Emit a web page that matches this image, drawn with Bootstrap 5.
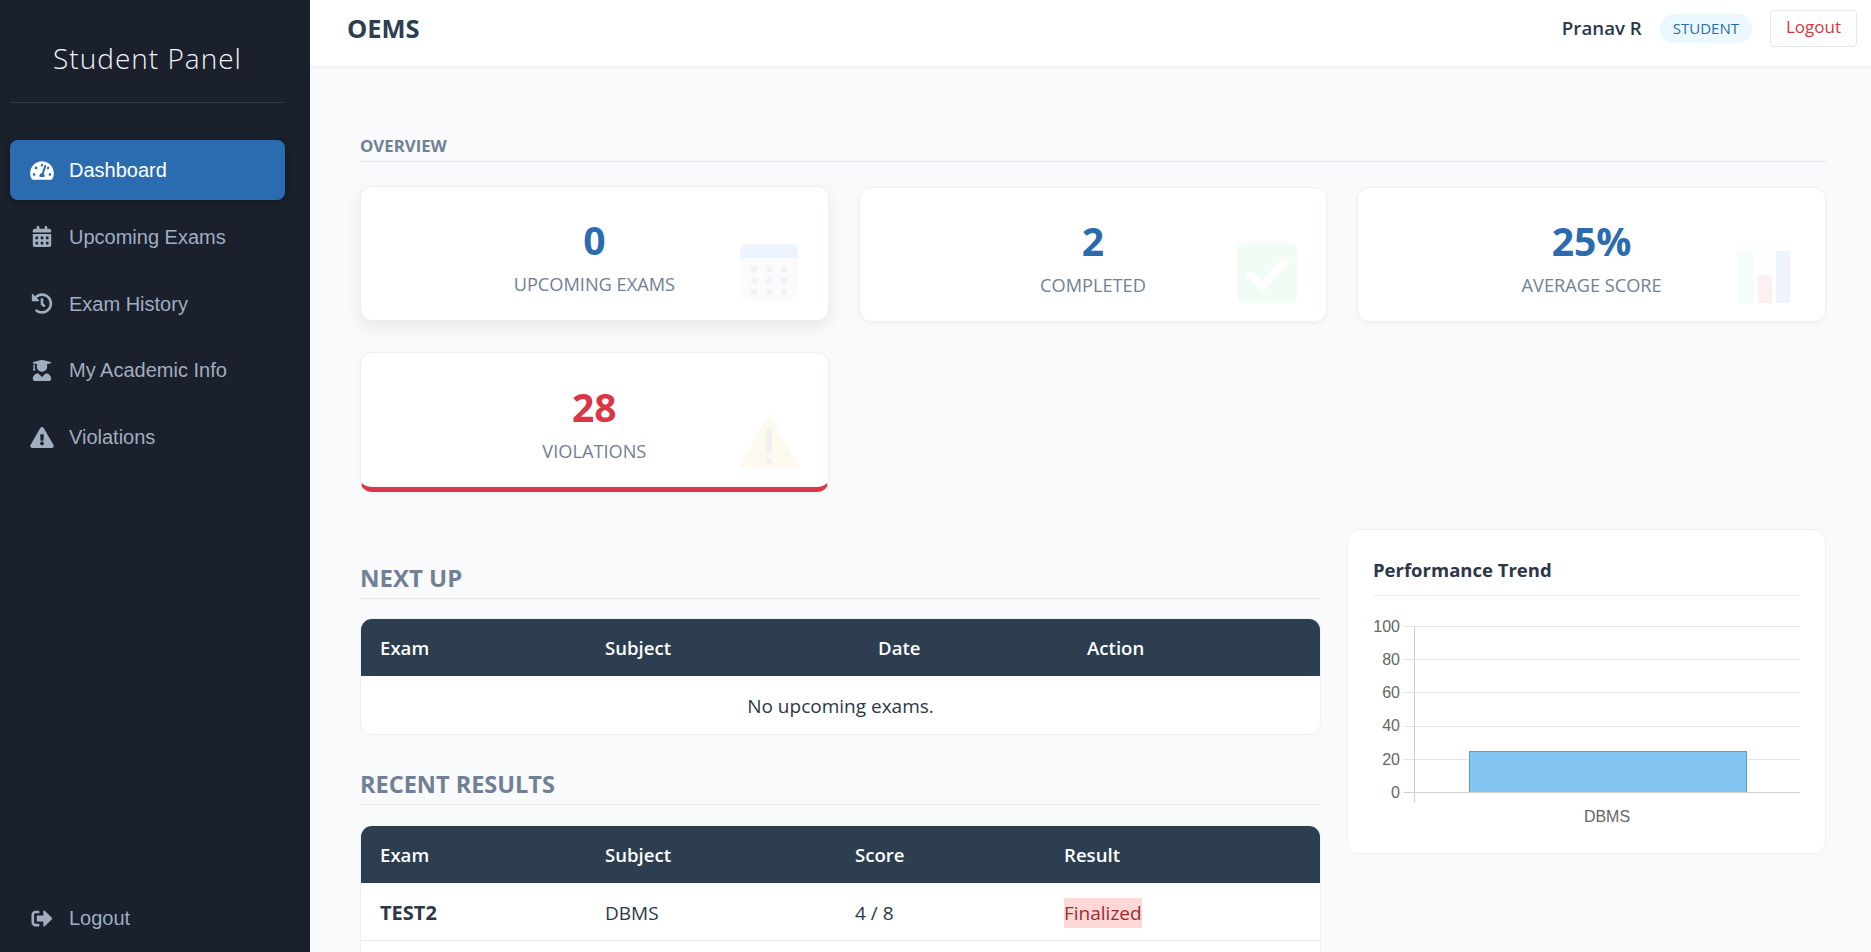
<!DOCTYPE html>
<html lang="en">
<head>
    <meta charset="UTF-8">
    <meta name="viewport" content="width=device-width, initial-scale=1.0">
    <title>OEMS - Student Dashboard</title>
    <link href="https://cdn.jsdelivr.net/npm/bootstrap@5.3.0/dist/css/bootstrap.min.css" rel="stylesheet">
    <style>
        html, body { height: 100%; overflow: hidden; }
        body {
            font-family: "Open Sans", "Noto Sans", sans-serif;
            background: #f8fafc;
            color: #2d3748;
        }
        .app-shell { height: 952px; }
        .side-panel { width: 310px; background: #1a202c; padding: 0 25px 0 10px; }
        .side-title {
            font-weight: 300;
            font-size: 28px;
            letter-spacing: 1px;
            line-height: 38px;
            color: #f1f5f9;
            text-align: center;
            padding: 39px 0 25px;
            border-bottom: 1px solid #2d3748;
            margin-bottom: 37px;
        }
        .side-link {
            font-family: "Liberation Sans", Arial, sans-serif;
            font-size: 20px;
            color: #a0aec0;
            height: 60px;
            margin-bottom: 6.8px;
            padding-left: 20px;
            border-radius: 8px;
            text-decoration: none;
        }
        .side-link svg { width: 24px; height: 21px; fill: currentColor; margin-right: 15px; flex: none; }
        .side-link.is-active { background: #2b6cb0; color: #fff; box-shadow: 0 2px 6px rgba(0,0,0,.25); }
        .side-foot { margin-top: auto; margin-bottom: 4px; }

        .top-strip {
            height: 67px;
            background: #fff;
            border-bottom: 1px solid #e9edf2;
            box-shadow: 0 1px 3px rgba(0,0,0,.04);
            padding: 0 14px 0 37px;
        }
        .brand-name { font-size: 25.5px; font-weight: 700; color: #2c3e50; margin-bottom: 10px; }
        .user-name { font-size: 18.7px; font-weight: 600; color: #2d3748; margin-right: 18px; }
        .role-chip {
            font-size: 15px;
            font-weight: 500;
            color: #2b6cb0;
            background: #ebf8ff;
            border-radius: 15px;
            padding: 4px 13px;
            margin-right: 18px;
            line-height: 21px;
        }
        .top-right { margin-bottom: 10px; }
        .logout-btn {
            font-size: 17px;
            color: #d9363e;
            background: #fff;
            border: 1px solid #e2e8f0;
            border-radius: 4px;
            padding: 2px 15px 6px;
            line-height: 27px;
        }

        .page-body { padding: 67px 45px 0 50px; }
        .overview-label {
            font-size: 16.8px;
            font-weight: 700;
            color: #718096;
            border-bottom: 1px solid #e2e8f0;
            line-height: 24px;
            padding-bottom: 3px;
            margin-bottom: 25px;
        }
        .stat-row { --bs-gutter-x: 30px; --bs-gutter-y: 30px; }
        .stat-box {
            position: relative;
            height: 135px;
            background: #fff;
            border: 1px solid #edf0f4;
            border-radius: 12px;
            box-shadow: 0 2px 5px rgba(0,0,0,.04);
            text-align: center;
            padding-top: 27px;
        }
        .stat-box.is-hover { transform: translateY(-1px); box-shadow: 0 6px 16px rgba(0,0,0,.08); }
        .stat-box.is-alert { height: 140px; border-bottom: 5px solid #dc3545; padding-top: 28px; }
        .stat-num { font-size: 39px; font-weight: 700; line-height: 52px; color: #2b6cb0; }
        .is-alert .stat-num { color: #dc3545; }
        .stat-text { font-size: 18.2px; line-height: 26px; color: #718096; margin-top: 5px; }
        .stat-glyph { position: absolute; right: 29px; bottom: 18px; width: 60px; height: 60px; opacity: .08; filter: blur(.6px); }
        .is-alert .stat-glyph { bottom: 16px; }

        .lower-row { margin-top: 37px; gap: 26px; }
        .lower-left { flex: 1 1 0; min-width: 0; }
        .lower-right { width: 479px; flex: none; }
        .section-head {
            font-size: 24px;
            font-weight: 700;
            color: #718096;
            line-height: 32px;
            border-bottom: 1px solid #e2e8f0;
            padding: 33px 0 4px;
            margin-bottom: 20px;
        }
        .section-head.is-next { margin-bottom: 19px; }
        .section-head.is-recent { font-size: 23.5px; }
        .data-wrap {
            background: #fff;
            border: 1px solid #edf0f4;
            border-radius: 12px;
            overflow: hidden;
        }
        .data-table { width: 100%; font-size: 19px; }
        .data-table th {
            background: #2c3e50;
            color: #fff;
            font-weight: 600;
            font-size: 18.6px;
            height: 57px;
            padding: 1px 19px 0;
            vertical-align: middle;
        }
        .data-table td {
            height: 57px;
            padding: 3px 19px 0;
            border-bottom: 1px solid #e2e8f0;
            vertical-align: middle;
            color: #2d3748;
        }
        .data-table td.is-empty { text-align: center; border-bottom: 0; height: 58px; }
        .data-table td.cell-strong { font-weight: 700; font-size: 20px; }
        .status-final { background: #fed7d7; color: #9b2c2c; padding: 2px 0; }

        .chart-panel {
            height: 325px;
            background: #fff;
            border: 1px solid #edf0f4;
            border-radius: 12px;
            padding: 27px 25px 25px;
        }
        .chart-title {
            font-size: 18.5px;
            font-weight: 700;
            color: #2d3748;
            line-height: 26px;
            padding-bottom: 12px;
            border-bottom: 1px solid #edf0f4;
            margin: 0;
        }
        .chart-svg { display: block; width: 427px; height: 220px; margin-top: 14px; font-family: "Liberation Sans", Arial, sans-serif; }
    </style>
</head>
<body>
<div class="app-shell d-flex">
    <aside class="side-panel d-flex flex-column flex-shrink-0">
        <div class="side-title">Student Panel</div>
        <a href="#" class="side-link is-active d-flex align-items-center">
            <svg viewBox="0 0 576 512"><path d="M288 32C128.94 32 0 160.94 0 320c0 52.8 14.25 102.26 39.06 144.8 5.61 9.62 16.3 15.2 27.44 15.2h443c11.14 0 21.83-5.58 27.44-15.2C561.75 422.26 576 372.8 576 320c0-159.06-128.94-288-288-288zm0 64c14.71 0 26.58 10.13 30.32 23.65-1.11 2.26-2.64 4.23-3.45 6.67l-9.22 27.67c-5.13 3.49-10.97 6.01-17.64 6.01-17.67 0-32-14.33-32-32S270.33 96 288 96zM96 384c-17.67 0-32-14.33-32-32s14.33-32 32-32 32 14.33 32 32-14.33 32-32 32zm48-160c-17.67 0-32-14.33-32-32s14.33-32 32-32 32 14.33 32 32-14.33 32-32 32zm246.77-72.41l-61.33 184C343.13 347.33 352 364.54 352 384c0 11.72-3.38 22.55-8.88 32H232.88c-5.5-9.45-8.88-20.28-8.88-32 0-33.94 26.5-61.43 59.9-63.59l61.34-184.01c4.17-12.56 17.73-19.45 30.36-15.17 12.57 4.19 19.35 17.77 15.17 30.36zm14.66 57.2l15.52-46.55c3.47-1.29 7.13-2.23 11.05-2.23 17.67 0 32 14.33 32 32s-14.33 32-32 32c-11.38-.01-20.89-6.28-26.57-15.22zM480 384c-17.67 0-32-14.33-32-32s14.33-32 32-32 32 14.33 32 32-14.33 32-32 32z"/></svg>
            Dashboard
        </a>
        <a href="#" class="side-link d-flex align-items-center">
            <svg viewBox="0 0 448 512"><path d="M0 464c0 26.5 21.5 48 48 48h352c26.5 0 48-21.5 48-48V192H0v272zm320-196c0-6.6 5.4-12 12-12h40c6.6 0 12 5.4 12 12v40c0 6.6-5.4 12-12 12h-40c-6.6 0-12-5.4-12-12v-40zm0 128c0-6.6 5.4-12 12-12h40c6.6 0 12 5.4 12 12v40c0 6.6-5.4 12-12 12h-40c-6.6 0-12-5.4-12-12v-40zM192 268c0-6.6 5.4-12 12-12h40c6.6 0 12 5.4 12 12v40c0 6.6-5.4 12-12 12h-40c-6.6 0-12-5.4-12-12v-40zm0 128c0-6.6 5.4-12 12-12h40c6.6 0 12 5.4 12 12v40c0 6.6-5.4 12-12 12h-40c-6.6 0-12-5.4-12-12v-40zM64 268c0-6.6 5.4-12 12-12h40c6.6 0 12 5.4 12 12v40c0 6.6-5.4 12-12 12H76c-6.6 0-12-5.4-12-12v-40zm0 128c0-6.6 5.4-12 12-12h40c6.6 0 12 5.4 12 12v40c0 6.6-5.4 12-12 12H76c-6.6 0-12-5.4-12-12v-40zM400 64h-48V16c0-8.8-7.2-16-16-16h-32c-8.8 0-16 7.2-16 16v48H160V16c0-8.8-7.2-16-16-16h-32c-8.8 0-16 7.2-16 16v48H48C21.5 64 0 85.5 0 112v48h448v-48c0-26.5-21.5-48-48-48z"/></svg>
            Upcoming Exams
        </a>
        <a href="#" class="side-link d-flex align-items-center">
            <svg viewBox="0 0 512 512"><path d="M504 255.531c.253 136.64-111.18 248.372-247.82 248.468-59.015.042-113.223-20.53-155.822-54.911-11.077-8.94-11.905-25.541-1.839-35.607l11.267-11.267c8.609-8.609 22.353-9.551 31.891-1.984C173.062 425.135 212.781 440 256 440c101.705 0 184-82.311 184-184 0-101.705-82.311-184-184-184-48.814 0-93.149 18.969-126.068 49.932l50.754 50.754c10.08 10.08 2.941 27.314-11.313 27.314H24c-8.837 0-16-7.163-16-16V38.627c0-14.254 17.234-21.393 27.314-11.314l49.372 49.372C129.209 34.136 189.552 8 256 8c136.81 0 247.747 110.78 248 247.531zm-180.912 78.784l9.823-12.63c8.138-10.463 6.253-25.542-4.21-33.679L288 256.349V152c0-13.255-10.745-24-24-24h-16c-13.255 0-24 10.745-24 24v135.651l65.409 50.874c10.463 8.137 25.541 6.253 33.679-4.21z"/></svg>
            Exam History
        </a>
        <a href="#" class="side-link d-flex align-items-center">
            <svg viewBox="0 0 448 512"><path d="M319.4 320.6L224 416l-95.4-95.4C57.1 323.7 0 382.2 0 454.4v9.6c0 26.5 21.5 48 48 48h352c26.5 0 48-21.5 48-48v-9.6c0-72.2-57.1-130.7-128.6-133.8zM13.6 79.8l6.4 1.5v58.4c-7 4.2-12 11.5-12 20.3 0 8.4 4.6 15.4 11.1 19.7L3.5 242c-1.7 6.9 2.1 14 7.6 14h41.8c5.5 0 9.3-7.1 7.6-14l-15.6-62.3C51.4 175.4 56 168.4 56 160c0-8.8-5-16.1-12-20.3V87.1l66 15.9c-8.6 17.2-14 36.4-14 57 0 70.7 57.3 128 128 128s128-57.3 128-128c0-20.6-5.3-39.8-14-57l96.3-23.2c18.2-4.4 18.2-27.1 0-31.5l-190.4-46c-13-3.1-26.7-3.1-39.7 0L13.6 48.2c-18.1 4.4-18.1 27.2 0 31.6z"/></svg>
            My Academic Info
        </a>
        <a href="#" class="side-link d-flex align-items-center">
            <svg viewBox="0 0 576 512"><path d="M569.517 440.013C587.975 472.007 564.806 512 527.94 512H48.054c-36.937 0-59.999-40.055-41.577-71.987L246.423 23.985c18.467-32.009 64.72-31.951 83.154 0l239.94 416.028zM288 354c-25.405 0-46 20.595-46 46s20.595 46 46 46 46-20.595 46-46-20.595-46-46-46zm-43.673-165.346l7.418 136c.347 6.364 5.609 11.346 11.982 11.346h48.546c6.373 0 11.635-4.982 11.982-11.346l7.418-136c.375-6.874-5.098-12.654-11.982-12.654h-63.383c-6.884 0-12.356 5.78-11.981 12.654z"/></svg>
            Violations
        </a>
        <a href="#" class="side-link side-foot d-flex align-items-center">
            <svg viewBox="0 0 512 512"><path d="M497 273L329 441c-15 15-41 4.5-41-17v-96H152c-13.3 0-24-10.7-24-24v-96c0-13.3 10.7-24 24-24h136V88c0-21.4 25.9-32 41-17l168 168c9.3 9.4 9.3 24.6 0 34zM192 436v-40c0-6.6-5.4-12-12-12H96c-17.7 0-32-14.3-32-32V160c0-17.7 14.3-32 32-32h84c6.6 0 12-5.4 12-12V76c0-6.6-5.4-12-12-12H96c-53 0-96 43-96 96v192c0 53 43 96 96 96h84c6.6 0 12-5.4 12-12z"/></svg>
            Logout
        </a>
    </aside>

    <div class="flex-grow-1 overflow-hidden">
        <header class="top-strip d-flex align-items-center justify-content-between">
            <div class="brand-name">OEMS</div>
            <div class="top-right d-flex align-items-center">
                <span class="user-name">Pranav R</span>
                <span class="role-chip">STUDENT</span>
                <button type="button" class="logout-btn">Logout</button>
            </div>
        </header>

        <main class="page-body">
            <div class="overview-label">OVERVIEW</div>
            <div class="row row-cols-3 stat-row">
                <div class="col">
                    <div class="stat-box is-hover">
                        <div class="stat-num">0</div>
                        <div class="stat-text">UPCOMING EXAMS</div>
                        <svg class="stat-glyph" viewBox="0 0 60 60">
                            <rect x="1" y="2" width="58" height="56" rx="8" fill="#cfd8e8"/>
                            <path d="M1 16V10a8 8 0 0 1 8-8h42a8 8 0 0 1 8 8v6z" fill="#3b82f6"/>
                            <g fill="#64748b"><rect x="12" y="24" width="6" height="6"/><rect x="27" y="24" width="6" height="6"/><rect x="42" y="24" width="6" height="6"/><rect x="12" y="36" width="6" height="6"/><rect x="27" y="36" width="6" height="6"/><rect x="42" y="36" width="6" height="6" fill="#3b6fd4"/><rect x="12" y="47" width="6" height="6"/><rect x="27" y="47" width="6" height="6"/><rect x="42" y="47" width="6" height="6"/></g>
                        </svg>
                    </div>
                </div>
                <div class="col">
                    <div class="stat-box">
                        <div class="stat-num">2</div>
                        <div class="stat-text">COMPLETED</div>
                        <svg class="stat-glyph" viewBox="0 0 60 60">
                            <rect width="60" height="60" rx="7" fill="#4ade80"/>
                            <path d="M13 32l12 12 23-26" fill="none" stroke="#fff" stroke-width="8" stroke-linecap="round" stroke-linejoin="round"/>
                        </svg>
                    </div>
                </div>
                <div class="col">
                    <div class="stat-box">
                        <div class="stat-num">25%</div>
                        <div class="stat-text">AVERAGE SCORE</div>
                        <svg class="stat-glyph" viewBox="0 0 60 60">
                            <rect x="1" y="2" width="54" height="58" fill="#e5e7eb" opacity=".5"/>
                            <rect x="2" y="10" width="16" height="50" fill="#86efac"/>
                            <rect x="22" y="32" width="14" height="28" fill="#f43f5e"/>
                            <rect x="40" y="8" width="14" height="52" fill="#3b82f6"/>
                        </svg>
                    </div>
                </div>
                <div class="col">
                    <div class="stat-box is-alert">
                        <div class="stat-num">28</div>
                        <div class="stat-text">VIOLATIONS</div>
                        <svg class="stat-glyph" viewBox="0 0 60 60">
                            <path d="M30 3L60 56H0z" fill="#fbbf24"/>
                            <rect x="27" y="17" width="6" height="26" rx="3" fill="#475569"/>
                            <circle cx="30" cy="50" r="3" fill="#475569"/>
                        </svg>
                    </div>
                </div>
            </div>

            <div class="lower-row d-flex align-items-start">
                <div class="lower-left">
                    <div class="section-head is-next">NEXT UP</div>
                    <div class="data-wrap">
                        <table class="data-table">
                            <colgroup><col style="width:225px"><col style="width:273px"><col style="width:209px"><col></colgroup>
                            <thead><tr><th>Exam</th><th>Subject</th><th>Date</th><th>Action</th></tr></thead>
                            <tbody><tr><td colspan="4" class="is-empty">No upcoming exams.</td></tr></tbody>
                        </table>
                    </div>
                    <div class="section-head is-recent">RECENT RESULTS</div>
                    <div class="data-wrap">
                        <table class="data-table">
                            <colgroup><col style="width:225px"><col style="width:250px"><col style="width:209px"><col></colgroup>
                            <thead><tr><th>Exam</th><th>Subject</th><th>Score</th><th>Result</th></tr></thead>
                            <tbody>
                                <tr><td class="cell-strong">TEST2</td><td>DBMS</td><td>4 / 8</td><td><span class="status-final">Finalized</span></td></tr>
                                <tr><td colspan="4">&nbsp;</td></tr>
                            </tbody>
                        </table>
                    </div>
                </div>
                <div class="lower-right chart-panel">
                    <div class="chart-title">Performance Trend</div>
                    <svg class="chart-svg" viewBox="0 0 427 220">
                        <g stroke="#e4e4e4" stroke-width="1">
                            <line x1="31" y1="16.5" x2="427" y2="16.5"/>
                            <line x1="31" y1="49.5" x2="427" y2="49.5"/>
                            <line x1="31" y1="82.5" x2="427" y2="82.5"/>
                            <line x1="31" y1="116.5" x2="427" y2="116.5"/>
                            <line x1="31" y1="149.5" x2="427" y2="149.5"/>
                        </g>
                        <line x1="41.5" y1="16" x2="41.5" y2="193" stroke="#cfcfcf"/>
                        <rect x="96.5" y="141.5" width="277" height="41" fill="#85c5f1" stroke="#4a9fdc"/>
                        <line x1="31" y1="182.5" x2="427" y2="182.5" stroke="#cfcfcf"/>
                        <g font-size="16" fill="#666" text-anchor="end">
                            <text x="27" y="22">100</text>
                            <text x="27" y="55">80</text>
                            <text x="27" y="88">60</text>
                            <text x="27" y="121">40</text>
                            <text x="27" y="155">20</text>
                            <text x="27" y="188">0</text>
                        </g>
                        <text x="234" y="212" font-size="16" fill="#666" text-anchor="middle">DBMS</text>
                    </svg>
                </div>
            </div>
        </main>
    </div>
</div>
<script src="https://cdn.jsdelivr.net/npm/bootstrap@5.3.0/dist/js/bootstrap.bundle.min.js"></script>
</body>
</html>
